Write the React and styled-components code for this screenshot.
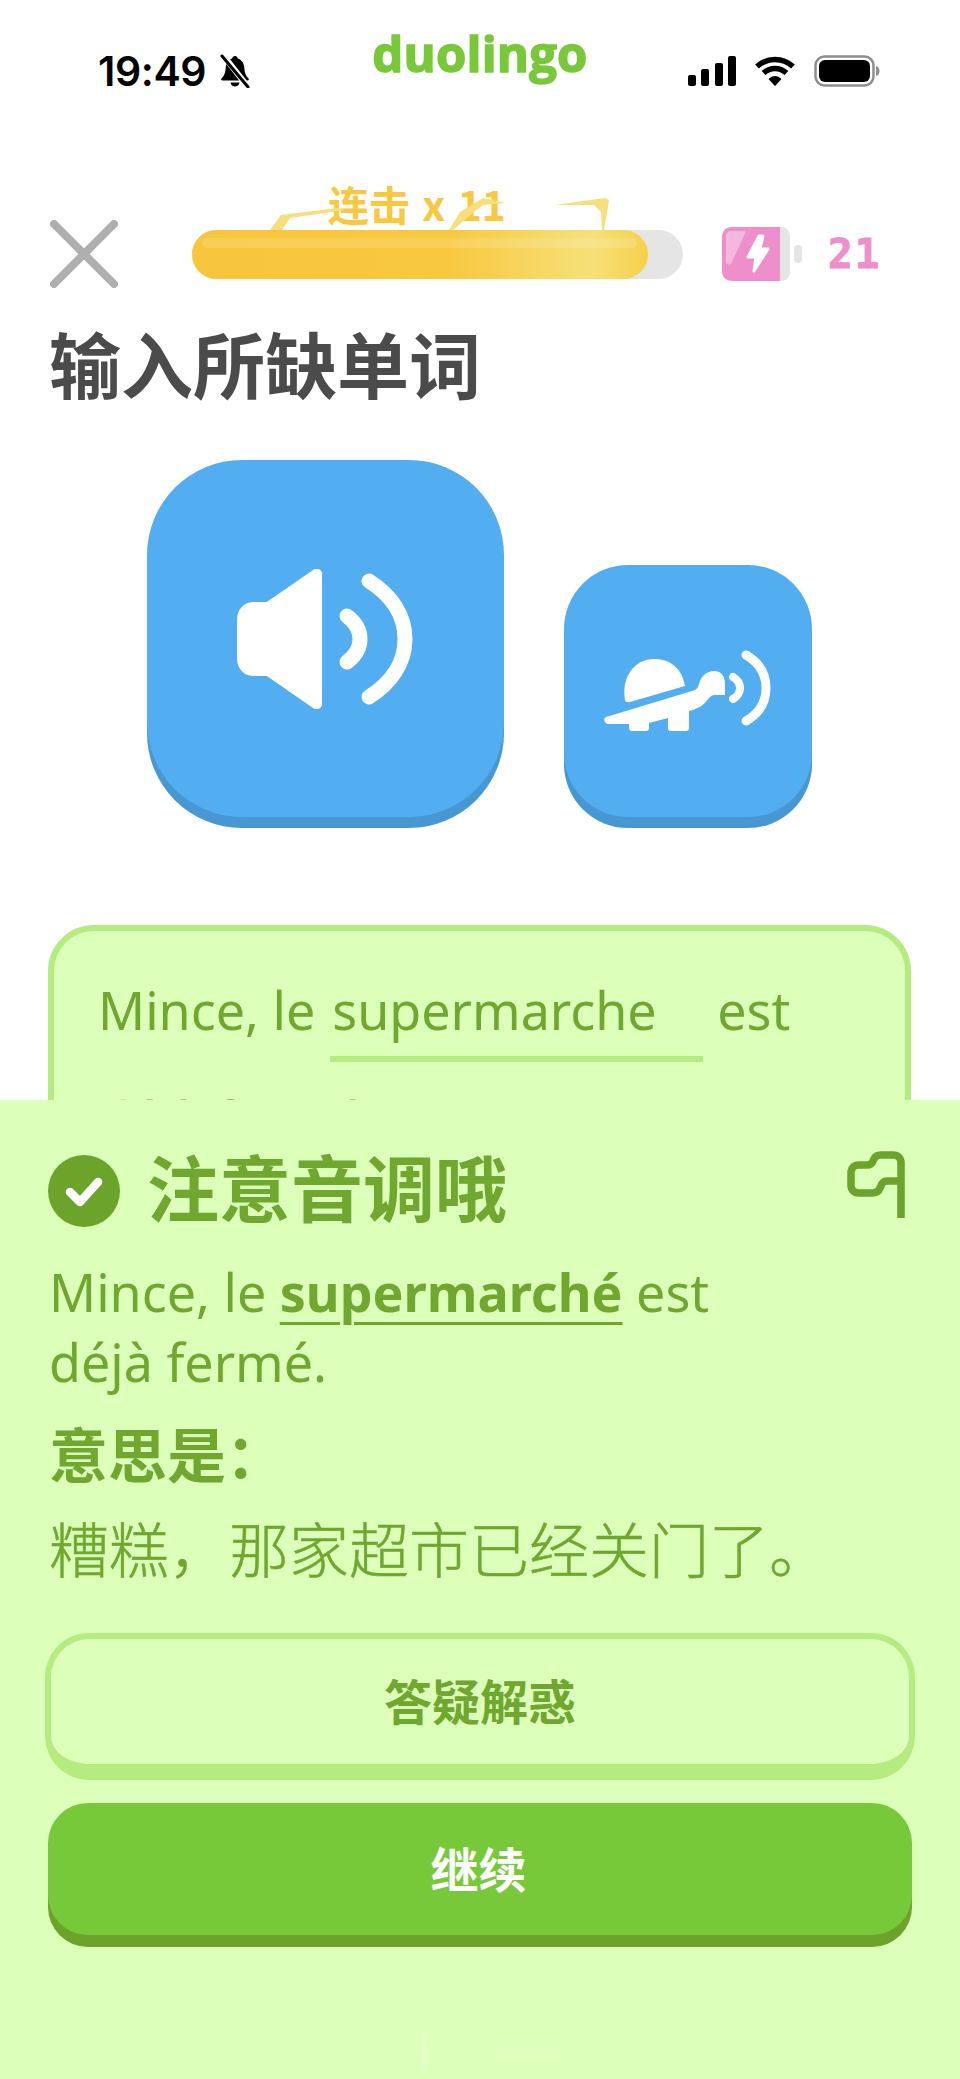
import React from "react";
import styled, { createGlobalStyle } from "styled-components";

const Global = createGlobalStyle`
  html, body { margin: 0; padding: 0; background: #fff; }
  * { box-sizing: border-box; }
`;

const cjk = `"Noto Sans CJK SC", "Noto Sans", sans-serif`;
const latin = `"Noto Sans", "Noto Sans CJK SC", sans-serif`;
const green = "#6fa72f";

const Page = styled.div`
  position: relative;
  width: 960px;
  height: 2079px;
  overflow: hidden;
  background: #fff;
`;
const StatusBar = styled.div`
  display: flex;
  justify-content: space-between;
  align-items: flex-start;
  height: 220px;
  padding: 28px 80px 0 98px;
`;
const TimeGroup = styled.div`
  display: flex;
  align-items: center;
  gap: 13px;
  width: 274px;
  height: 56px;
  margin-top: 15px;
`;
const Time = styled.span`
  font: 600 41px/56px Inter, sans-serif;
  color: #000;
  letter-spacing: -0.4px;
`;
const Logo = styled.div`
  width: 216px;
  text-align: center;
  white-space: nowrap;
  font: 700 49px/50px "Open Sans", sans-serif;
  letter-spacing: 0.2px;
  color: #78c83a;
  -webkit-text-stroke: 1.5px #78c83a;
`;
const SysIcons = styled.div`
  display: flex;
  align-items: center;
  justify-content: flex-end;
  gap: 18px;
  width: 292px;
  height: 56px;
  margin-top: 15px;
`;
const ProgressRow = styled.div`
  display: flex;
  align-items: center;
  height: 68px;
  padding-left: 50px;
`;
const Track = styled.div`
  position: relative;
  width: 491px;
  height: 49px;
  margin-left: 74px;
  border-radius: 25px;
  background: #e5e5e5;
`;
const Fill = styled.div`
  position: relative;
  width: 456px;
  height: 100%;
  border-radius: 25px;
  background: linear-gradient(90deg, #f8c63c 0%, #f8c83f 56%, #f6de72 84%, #f6e078 88%, #f6d04a 100%);
`;
const Shine = styled.div`
  position: absolute;
  left: 10px;
  right: 11px;
  top: 8px;
  height: 10px;
  border-radius: 5px;
  background: rgba(255, 255, 255, 0.14);
`;
const Streak = styled.div`
  position: absolute;
  left: 136px;
  top: -50px;
  font: 700 41px/46px ${cjk};
  word-spacing: 3px;
  color: #f8c83f;
  white-space: nowrap;
`;
const Wisps = styled.svg`
  position: absolute;
  left: 0;
  top: -40px;
  overflow: visible;
`;
const Energy = styled.div`
  display: flex;
  align-items: center;
  margin-left: 39px;
`;
const EnergyCount = styled.span`
  margin-left: 26px;
  font: 700 41px/48px "DejaVu Sans Mono", monospace;
  letter-spacing: 2px;
  color: #ee8fcb;
  -webkit-text-stroke: 1px #ee8fcb;
`;
const Heading = styled.h1`
  margin: 31px 0 0 49px;
  font: 700 72px/86px ${cjk};
  color: #4b4b4b;
`;
const AudioRow = styled.div`
  display: flex;
  justify-content: center;
  align-items: flex-end;
  gap: 60px;
  margin: 55px 0 0 -2px;
`;
const AudioButton = styled.div`
  display: flex;
  align-items: center;
  justify-content: center;
  width: ${(p) => p.$w}px;
  height: ${(p) => p.$h}px;
  border-radius: ${(p) => p.$r}px;
  background: #53adf1;
  box-shadow: 0 11px 0 #4797d3;
  margin-bottom: 11px;
`;
const AnswerCard = styled.div`
  width: 863px;
  height: 300px;
  margin: 97px 0 0 48px;
  padding: 41px 0 0 44px;
  border: 6px solid #b5ec80;
  border-radius: 46px;
  background: #dcffba;
  font: 400 52px/75px ${latin};
  color: ${green};
`;
const CardLine = styled.div`
  display: flex;
  height: 110px;
`;
const Blank = styled.span`
  display: block;
  width: 373px;
  height: 90px;
  margin: 0 14px 0 15px;
  padding-left: 2px;
  border-bottom: 6px solid #b5ec80;
  white-space: nowrap;
`;
const Sheet = styled.div`
  position: absolute;
  left: 0;
  right: 0;
  top: 1100px;
  bottom: 0;
  padding: 0 45px 0 48px;
  background: #dcffba;
`;
const SheetHeader = styled.div`
  display: flex;
  align-items: center;
  height: 86px;
  margin-top: 48px;
`;
const SheetTitle = styled.h2`
  flex: 1;
  margin: 0 0 13px 27px;
  font: 700 72px/86px ${cjk};
  color: ${green};
`;
const FlagButton = styled.div`
  display: flex;
  margin: 0 10px 14px 0;
`;
const Sentence = styled.p`
  margin: 23px 0 0 1px;
  width: 720px;
  font: 400 52px/70px ${latin};
  color: ${green};
`;
const Word = styled.b`
  font-weight: 700;
  text-decoration: underline;
  text-decoration-thickness: 3px;
  text-underline-offset: 10px;
`;
const MeaningLabel = styled.h3`
  margin: 20px 0 0 1px;
  font: 700 59px/72px ${cjk};
  color: ${green};
`;
const Meaning = styled.p`
  margin: 19px 0 0 1px;
  font: 300 60px/78px ${cjk};
  color: ${green};
  -webkit-text-stroke: 0.5px ${green};
  white-space: nowrap;
`;
const GhostButton = styled.div`
  display: flex;
  align-items: center;
  justify-content: center;
  width: 870px;
  height: 147px;
  margin: 47px 0 0 -3px;
  padding-bottom: 6px;
  border: 6px solid #b5ec80;
  border-bottom-width: 16px;
  border-radius: 44px;
  font: 700 48px/60px ${cjk};
  color: ${green};
`;
const SolidButton = styled.div`
  display: flex;
  align-items: center;
  justify-content: center;
  width: 864px;
  height: 132px;
  margin-top: 23px;
  padding: 0 3px 5px 0;
  border-radius: 40px;
  background: #78c93a;
  box-shadow: 0 12px 0 #6ca32b;
  font: 700 48px/60px ${cjk};
  color: #fff;
`;
const HomeGhost = styled.div`
  position: absolute;
  left: 420px;
  top: 2033px;
  width: 140px;
  height: 37px;
  background:
    linear-gradient(rgba(255, 255, 255, 0.16), rgba(255, 255, 255, 0.16)) 2px 0 / 5px 37px no-repeat,
    linear-gradient(rgba(255, 255, 255, 0.08), rgba(255, 255, 255, 0.08)) 77px 10px / 63px 17px no-repeat;
`;

const Bell = () => (
  <svg width="32" height="34" viewBox="0 0 32 34" fill="none">
    <path d="M16 2c1.600 0 2.600 1 2.800 2.600C23 6 25 9.500 25.300 14c.3 4.500 1.500 8 4.200 10.500.8.800.3 2-.9 2H3.400c-1.200 0-1.700-1.200-.9-2C5.200 22 6.400 18.500 6.700 14 7 9.500 9 6 13.200 4.600 13.400 3 14.400 2 16 2Z" fill="#000" />
    <path d="M11.500 28.500h9c-.4 2.500-2.200 4-4.500 4s-4.100-1.500-4.500-4Z" fill="#000" />
    <path d="M4 1l25 32" stroke="#fff" strokeWidth="6" />
    <path d="M3 2l26 31" stroke="#000" strokeWidth="3" strokeLinecap="round" />
  </svg>
);
const Signal = () => (
  <svg width="48" height="30" viewBox="0 0 48 30" fill="#000">
    <rect x="0" y="19" width="8" height="11" rx="2" />
    <rect x="13" y="13" width="8" height="17" rx="2" />
    <rect x="27" y="7" width="8" height="23" rx="2" />
    <rect x="40" y="0" width="8" height="30" rx="2" />
  </svg>
);
const Wifi = () => (
  <svg width="42" height="30" viewBox="0 0 42 30" fill="none" stroke="#000" strokeWidth="5.500">
    <path d="M3 10.500C13.500 1 28.500 1 39 10.500" />
    <path d="M9.500 17c7-6 16-6 23 0" />
    <path d="M15.500 23c3.500-2.800 7.500-2.800 11 0L21 29Z" fill="#000" stroke="#000" strokeWidth="1.500" strokeLinejoin="round" />
  </svg>
);
const PhoneBattery = () => (
  <svg width="66" height="32" viewBox="0 0 66 32">
    <rect x="1.500" y="1.500" width="58" height="29" rx="9" fill="none" stroke="#8e8e8e" strokeWidth="2.500" />
    <rect x="5" y="5" width="51" height="22" rx="6" fill="#000" />
    <path d="M62 11c2.500.8 3.500 2.500 3.500 5s-1 4.200-3.500 5Z" fill="#8e8e8e" />
  </svg>
);
const Close = () => (
  <svg width="68" height="68" viewBox="0 0 68 68" fill="none" stroke="#afafaf" strokeWidth="8" strokeLinecap="round">
    <path d="M4 4l60 60M64 4L4 64" />
  </svg>
);
const EnergyIcon = () => (
  <svg width="80" height="54" viewBox="0 0 80 54">
    <path d="M10 0h48v54H10C4 54 0 50 0 44V10C0 4 4 0 10 0Z" fill="#ee8fcb" />
    <path d="M58 0h1c6 0 9 4 9 10v34c0 6-3 10-9 10h-1Z" fill="#e5e5e5" />
    <rect x="72" y="18" width="8" height="18" rx="4" fill="#e5e5e5" />
    <path d="M8 4h14c1 0 1.500 1 1 2.500L10 35c-2 4-6 3-6-1V9c0-3 2-5 4-5Z" fill="#f5b8dd" />
    <polygon points="37,9 26,30 34,30 32,44 46,22 38,22 41,9" fill="#fff" stroke="#fff" strokeWidth="3" strokeLinejoin="round" />
  </svg>
);
const Speaker = () => (
  <svg width="176" height="140" viewBox="0 0 176 140" fill="none">
    <path d="M16 33h12c2 0 3-.6 4-1.500L76 1c4-2.500 9-.5 9 4v130c0 4.500-5 6.500-9 4L32 108.500c-1-.9-2-1.500-4-1.500H16C6 107 0 98 0 90V50C0 42 6 33 16 33Z" fill="#fff" />
    <path d="M110 47c8 6 13 13 13 23s-5 17-13 23" stroke="#fff" strokeWidth="15" strokeLinecap="round" />
    <path d="M132 12c22 14 36 34 36 58s-14 44-36 58" stroke="#fff" strokeWidth="15" strokeLinecap="round" />
  </svg>
);
const Turtle = () => (
  <svg width="167" height="82" viewBox="0 0 167 82" fill="none">
    <path d="M21 50C17 28 30 9 50 9c17 0 28 10 31 27L26 52c-3 .7-4.500 0-5-2Z" fill="#fff" />
    <path d="M2 67L88 41c4-1 6-3 7-7 2-8 8-13 15-13 8 0 11 6 11 13v11h-10c-3 0-4 1-6 3-5 7-11 11-20 13v17c0 2-1 3-3 3H67c-2 0-3-1-3-3V68l-19 5v5c0 2-1 3-3 3H28c-2 0-3-1-3-3v-4H4C0 74-1 68 2 67Z" fill="#fff" />
    <path d="M129 27c5 3 7 7 7 11s-2 8-7 11" stroke="#fff" strokeWidth="8" strokeLinecap="round" />
    <path d="M142 5c12 7 20 18 20 33s-8 26-20 33" stroke="#fff" strokeWidth="9" strokeLinecap="round" />
  </svg>
);
const Check = () => (
  <svg width="72" height="72" viewBox="0 0 72 72" style={{ flex: "none" }}>
    <circle cx="36" cy="36" r="36" fill="#6ca32b" />
    <path d="M22 37l10 10 18-20" fill="none" stroke="#fff" strokeWidth="8.500" strokeLinecap="round" strokeLinejoin="round" />
  </svg>
);
const Flag = () => (
  <svg width="58" height="67" viewBox="0 0 58 67" fill="none" stroke="#6ca32b" strokeWidth="7.500">
    <path d="M54 67V12c0-5-3-8-8-8H34c-4 0-6 1.500-7 4l-1 2c-1 3-3 4-6 4H12c-5 0-8 3-8 8v12c0 5 3 8 8 8h13c4 0 7-2 8-5l1-2c1-3 3-5 6-5h14" />
  </svg>
);

export default function App() {
  return (
    <Page>
      <Global />
      <StatusBar>
        <TimeGroup>
          <Time>19:49</Time>
          <Bell />
        </TimeGroup>
        <Logo>duolingo</Logo>
        <SysIcons>
          <Signal />
          <Wifi />
          <PhoneBattery />
        </SysIcons>
      </StatusBar>
      <ProgressRow>
        <Close />
        <Track>
          <Fill>
            <Shine />
          </Fill>
          <Streak>连击 x 11</Streak>
          <Wisps width="491" height="40" viewBox="0 0 491 40">
            <path d="M78 40l11-15 57-7 7 2-55 8-8 12Z" fill="#f7df7c" />
            <path d="M257 40l11-18 23-14 23 5-23 2-15 12-15 13Z" fill="#f7df7c" />
            <path d="M362 15l51-7 4 2-2 13-3 17h-2l-1-18-7-7Z" fill="#f7df7c" />
          </Wisps>
        </Track>
        <Energy>
          <EnergyIcon />
          <EnergyCount>21</EnergyCount>
        </Energy>
      </ProgressRow>
      <Heading>输入所缺单词</Heading>
      <AudioRow>
        <AudioButton $w={357} $h={357} $r={95}>
          <Speaker />
        </AudioButton>
        <AudioButton $w={248} $h={252} $r={64}>
          <Turtle />
        </AudioButton>
      </AudioRow>
      <AnswerCard>
        <CardLine>
          Mince, le
          <Blank>supermarche</Blank>
          est
        </CardLine>
        <div>déjà fermé.</div>
      </AnswerCard>
      <Sheet>
        <SheetHeader>
          <Check />
          <SheetTitle>注意音调哦</SheetTitle>
          <FlagButton>
            <Flag />
          </FlagButton>
        </SheetHeader>
        <Sentence>
          Mince, le <Word>supermarché</Word> est déjà fermé.
        </Sentence>
        <MeaningLabel>意思是：</MeaningLabel>
        <Meaning>糟糕，那家超市已经关门了。</Meaning>
        <GhostButton>答疑解惑</GhostButton>
        <SolidButton>继续</SolidButton>
      </Sheet>
      <HomeGhost />
    </Page>
  );
}
